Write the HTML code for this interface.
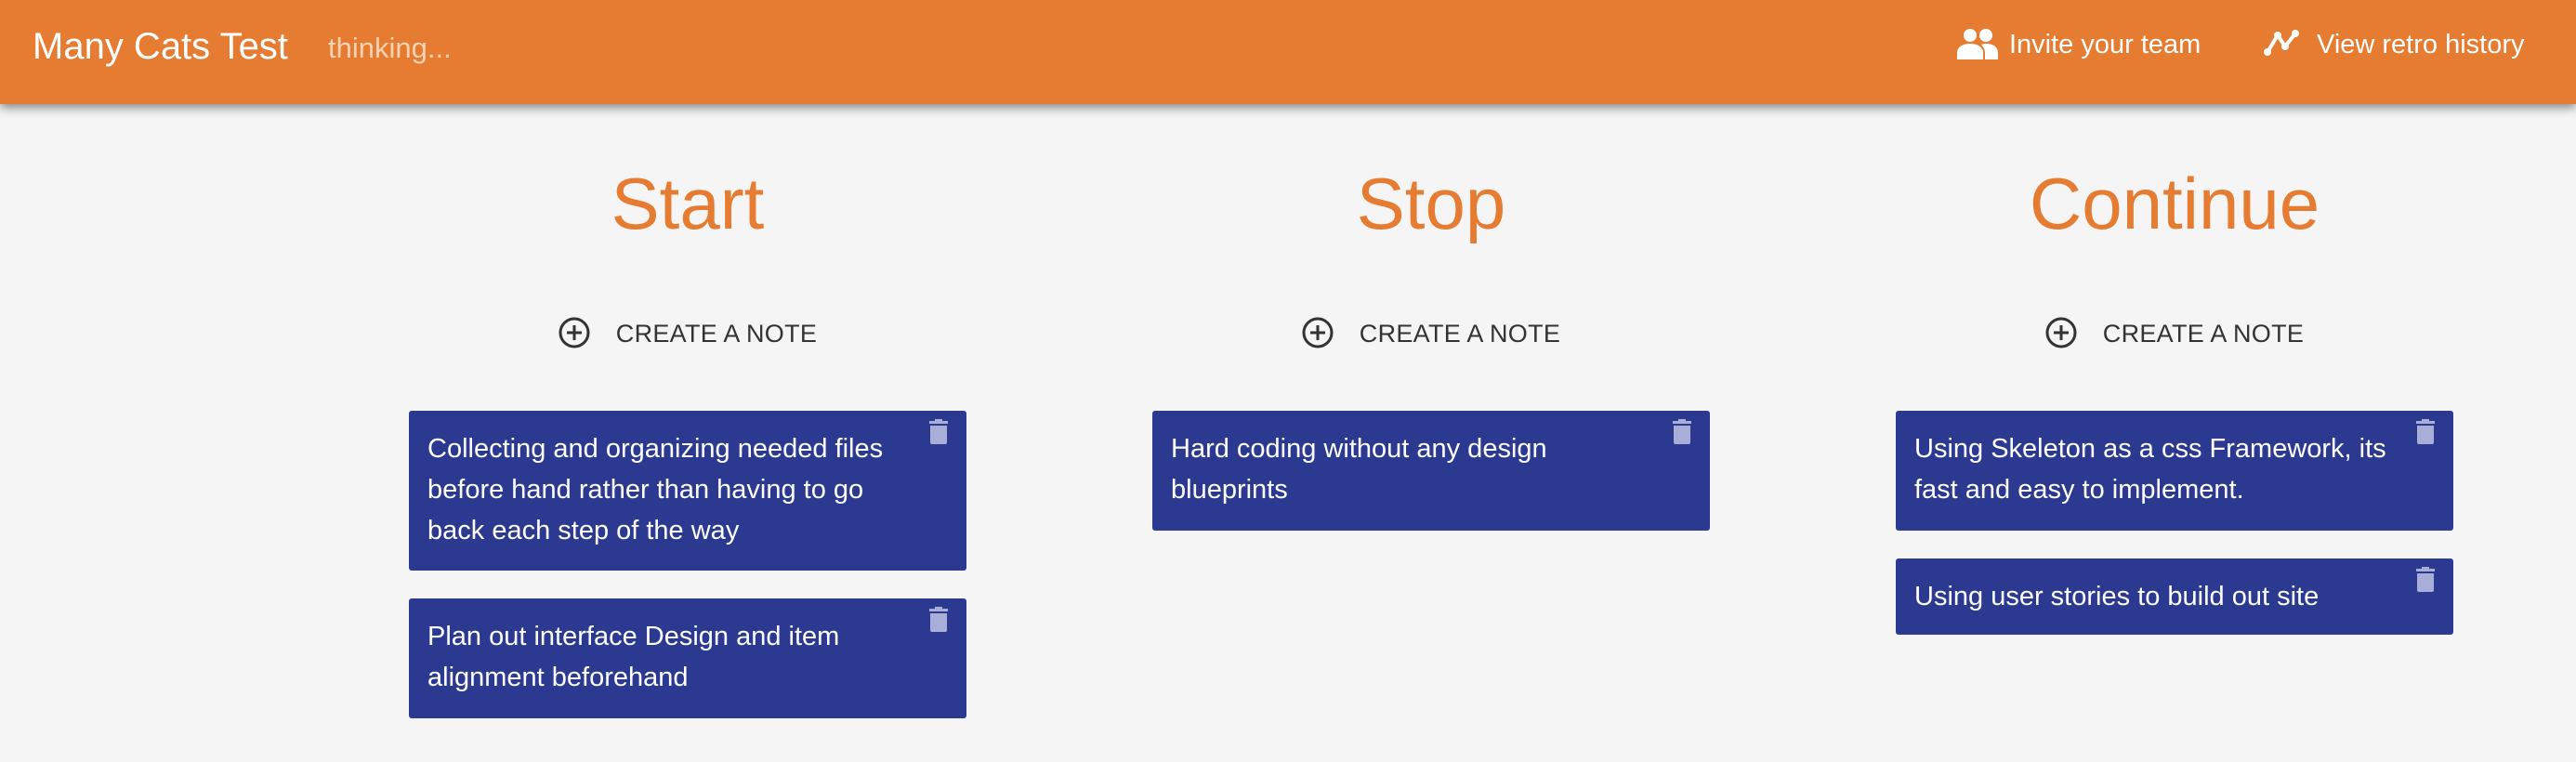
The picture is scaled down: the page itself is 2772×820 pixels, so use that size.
<!DOCTYPE html>
<html><head><meta charset="utf-8"><style>
*{margin:0;padding:0;box-sizing:border-box}
body{width:2772px;height:820px;background:#f5f5f5;font-family:"Liberation Sans",sans-serif;position:relative;overflow:hidden}
.hdr{position:absolute;left:0;top:0;width:2772px;height:112px;background:#e57c32;box-shadow:0 4px 10px rgba(0,0,0,.45)}
.t{position:absolute;color:#fff;white-space:nowrap}
.col{position:absolute;top:0;width:800px}
.h{position:absolute;top:174px;width:800px;text-align:center;color:#e57c32;font-size:78px;font-weight:300}
.cr{position:absolute;top:344px;left:0;width:800px;text-align:center;font-size:27px;color:#333;letter-spacing:.3px}
.cr svg{vertical-align:middle;margin-right:28px;margin-top:-6px}
.card{position:absolute;left:100px;width:600px;background:#2b3990;border-radius:3px;color:#fff;font-size:29px;line-height:44px;padding:19px 60px 0 20px}
.tr{position:absolute;right:20px;top:8px}
</style></head><body>
<div class="hdr">
<div class="t" style="left:35px;top:28px;font-size:40px">Many Cats Test</div>
<div class="t" style="left:353px;top:34px;font-size:31px;color:#f7d2b5">thinking...</div>
<svg style="position:absolute;left:2105px;top:30px" width="46" height="34" viewBox="0 0 46 34"><circle cx="15" cy="8" r="7" fill="#fff"/><circle cx="32" cy="8" r="7" fill="#fff"/><path d="M1 34V27C1 20 8 17 15 17S29 20 29 27V34Z" fill="#fff"/><path d="M31 34V27C31 23 29 20 27 18C29 17 31 17 32 17C39 17 45 20 45 27V34Z" fill="#fff"/></svg>
<div class="t" style="left:2162px;top:32px;font-size:29px">Invite your team</div>
<svg style="position:absolute;left:2436px;top:30px" width="50" height="30" viewBox="0 0 50 30"><path d="M4 26L15 8L23 20L34 6" stroke="#fff" stroke-width="4" fill="none"/><circle cx="4" cy="26" r="4" fill="#fff"/><circle cx="15" cy="8" r="4" fill="#fff"/><circle cx="23" cy="20" r="4" fill="#fff"/><circle cx="34" cy="6" r="4" fill="#fff"/></svg>
<div class="t" style="left:2493px;top:32px;font-size:29px">View retro history</div>
</div>

<div class="col" style="left:340px">
<div class="h">Start</div>
<div class="cr"><svg width="34" height="34" viewBox="0 0 34 34"><circle cx="17" cy="17" r="15" stroke="#333" stroke-width="3" fill="none"/><path d="M17 9V25M9 17H25" stroke="#333" stroke-width="3"/></svg>CREATE A NOTE</div>
<div class="card" style="top:442px;height:172px">Collecting and organizing needed files before hand rather than having to go back each step of the way<svg class="tr" width="20" height="28" viewBox="0 0 20 28"><path d="M0 3H6V1H14V3H20V6H0Z M1 8H19V26Q19 28 17 28H3Q1 28 1 26Z" fill="#a9aed8"/></svg></div>
<div class="card" style="top:644px;height:129px">Plan out interface Design and item alignment beforehand<svg class="tr" width="20" height="28" viewBox="0 0 20 28"><path d="M0 3H6V1H14V3H20V6H0Z M1 8H19V26Q19 28 17 28H3Q1 28 1 26Z" fill="#a9aed8"/></svg></div>
</div>

<div class="col" style="left:1140px">
<div class="h">Stop</div>
<div class="cr"><svg width="34" height="34" viewBox="0 0 34 34"><circle cx="17" cy="17" r="15" stroke="#333" stroke-width="3" fill="none"/><path d="M17 9V25M9 17H25" stroke="#333" stroke-width="3"/></svg>CREATE A NOTE</div>
<div class="card" style="top:442px;height:129px">Hard coding without any design blueprints<svg class="tr" width="20" height="28" viewBox="0 0 20 28"><path d="M0 3H6V1H14V3H20V6H0Z M1 8H19V26Q19 28 17 28H3Q1 28 1 26Z" fill="#a9aed8"/></svg></div>
</div>

<div class="col" style="left:1940px">
<div class="h">Continue</div>
<div class="cr"><svg width="34" height="34" viewBox="0 0 34 34"><circle cx="17" cy="17" r="15" stroke="#333" stroke-width="3" fill="none"/><path d="M17 9V25M9 17H25" stroke="#333" stroke-width="3"/></svg>CREATE A NOTE</div>
<div class="card" style="top:442px;height:129px">Using Skeleton as a css Framework, its fast and easy to implement.<svg class="tr" width="20" height="28" viewBox="0 0 20 28"><path d="M0 3H6V1H14V3H20V6H0Z M1 8H19V26Q19 28 17 28H3Q1 28 1 26Z" fill="#a9aed8"/></svg></div>
<div class="card" style="top:601px;height:82px">Using user stories to build out site<svg class="tr" width="20" height="28" viewBox="0 0 20 28"><path d="M0 3H6V1H14V3H20V6H0Z M1 8H19V26Q19 28 17 28H3Q1 28 1 26Z" fill="#a9aed8"/></svg></div>
</div>
</body></html>
